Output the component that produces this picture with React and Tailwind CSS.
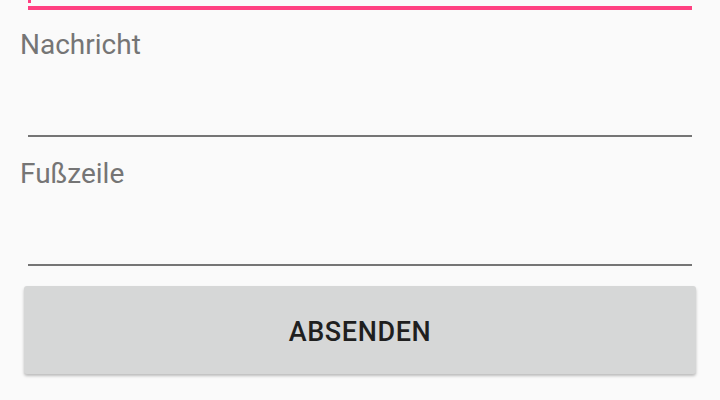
export default function App() {
  return (
    <div className="w-[720px] h-[400px] bg-[#fafafa] overflow-hidden relative" style={{ fontFamily: "Roboto, 'Noto Sans', sans-serif" }}>
      <div className="absolute left-[28px] top-0 w-[3px] h-[3px] bg-[#ff4081]" />
      <div className="flex flex-col">
        <div className="mx-[28px] mt-[6px] h-[4px] bg-[#ff4081]" />
        <div className="pl-[20px] pt-[19px] text-[28px] leading-[32px] text-[#757575]">Nachricht</div>
        <div className="mx-[28px] mt-[74px] h-[2px] bg-[#757575]" />
        <div className="pl-[20px] pt-[21px] text-[28px] leading-[32px] text-[#757575]">Fußzeile</div>
        <div className="mx-[28px] mt-[74px] h-[2px] bg-[#757575]" />
        <div className="mx-[24px] mt-[20px] h-[88px] pt-[4px] rounded-[3px] bg-[#d6d7d7] shadow-[0_2px_3px_rgba(0,0,0,0.25)] flex items-center justify-center text-[27px] font-medium text-[#1f1f1f] tracking-[0.6px]">
          ABSENDEN
        </div>
      </div>
    </div>
  );
}
